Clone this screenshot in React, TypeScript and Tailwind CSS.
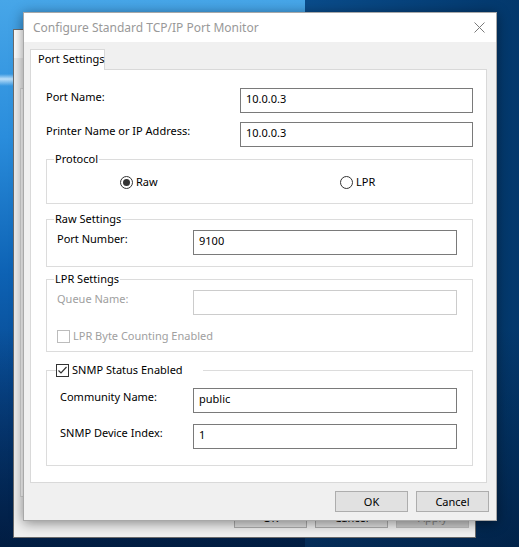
import type { ReactNode } from 'react';

const font = "font-['Segoe_UI','Noto_Sans',sans-serif] text-[11px] leading-[16px]";

function TextBox({ value, width, disabled }: { value?: string; width: string; disabled?: boolean }) {
  return (
    <div
      className={`${width} h-[25px] bg-white border px-[5px] pt-[2px] ${
        disabled ? 'border-[#cccccc]' : 'border-[#7a7a7a]'
      }`}
    >
      {value}
    </div>
  );
}

function Radio({ checked, label }: { checked?: boolean; label: string }) {
  return (
    <div className="flex items-center gap-[3px]">
      <span className="w-[13px] h-[13px] rounded-full border border-[#333333] bg-white flex items-center justify-center">
        {checked && <span className="w-[7px] h-[7px] rounded-full bg-[#333333]" />}
      </span>
      <span>{label}</span>
    </div>
  );
}

function CheckBox({ checked, disabled }: { checked?: boolean; disabled?: boolean }) {
  return (
    <span
      className={`w-[13px] h-[13px] bg-white border flex items-center justify-center ${
        disabled ? 'border-[#bcbcbc]' : 'border-[#333333]'
      }`}
    >
      {checked && (
        <svg width="11" height="11" viewBox="0 0 11 11">
          <path d="M1.5 5.5 L4 8 L9.5 2" fill="none" stroke="#333333" strokeWidth="1.2" />
        </svg>
      )}
    </span>
  );
}

function Group({ legend, className, children }: { legend: ReactNode; className: string; children: ReactNode }) {
  return (
    <fieldset className={`border border-[#dcdcdc] w-[427px] ${className}`}>
      {legend}
      {children}
    </fieldset>
  );
}

function TextLegend({ text }: { text: string }) {
  return <legend className="ml-[7px] px-[1px]">{text}</legend>;
}

function Row({ label, labelW, children, muted }: { label: string; labelW: string; children: ReactNode; muted?: boolean }) {
  return (
    <div className="flex items-start">
      <div className={`${labelW} pt-[1px] ${muted ? 'text-[#a0a0a0]' : ''}`}>{label}</div>
      {children}
    </div>
  );
}

function Button({ label, disabled }: { label: string; disabled?: boolean }) {
  return (
    <div
      className={`w-[73px] h-[21px] border flex items-center justify-center ${
        disabled ? 'bg-[#cccccc] border-[#bfbfbf] text-[#838383]' : 'bg-[#e1e1e1] border-[#adadad]'
      }`}
    >
      {label}
    </div>
  );
}

export default function App() {
  return (
    <div
      className={`relative w-[519px] h-[547px] overflow-hidden text-black ${font} bg-[linear-gradient(180deg,transparent_60%,rgba(0,18,45,0.55)_100%),linear-gradient(90deg,transparent_305px,#0a4c8b_305px,#03386c_100%),linear-gradient(180deg,transparent_74px,rgba(220,240,255,0.8)_79px,transparent_86px),linear-gradient(180deg,#47a6e8_0%,#2a8ddc_25%,#0d62b4_50%,#07468c_72%,#022a5c_100%)]`}
    >
      {/* back window (port properties) */}
      <div className="absolute left-[13px] top-[29px] w-[463px] h-[509px] bg-[#f0f0f0] border border-[#6b6b6b] flex flex-col">
        <div className="h-[28px] bg-white" />
        <div className="ml-[6px] mr-[6px] mt-[30px] h-[409px] bg-white border border-[#d9d9d9]" />
        <div className="flex justify-end gap-[8px] pr-[6px] mt-[10px]">
          <Button label="OK" />
          <Button label="Cancel" />
          <Button label="Apply" disabled />
        </div>
      </div>

      {/* front dialog */}
      <div className="absolute left-[23px] top-[12px] w-[474px] h-[509px] border border-[#a8a8a8] bg-[#f0f0f0] flex flex-col shadow-[0_2px_12px_rgba(0,0,0,0.45)]">
        <div className="h-[29px] bg-white flex items-center justify-between pl-[9px] pr-[11px]">
          <span className="text-[12px] text-[#999999]">Configure Standard TCP/IP Port Monitor</span>
          <svg width="11" height="11" viewBox="0 0 11 11">
            <path d="M0.5 0.5 L10.5 10.5 M10.5 0.5 L0.5 10.5" stroke="#7a7a7a" strokeWidth="1" />
          </svg>
        </div>

        <div className="pl-[6px] pt-[7px] flex flex-col">
          <div className="flex">
            <div className="relative z-10 -mb-px w-[75px] h-[21px] bg-white border border-b-0 border-[#d9d9d9] pl-[7px] pt-[1px] whitespace-nowrap">
              Port Settings
            </div>
          </div>

          <div className="w-[457px] h-[414px] bg-white border border-[#d9d9d9] pl-[15px] pt-[18px] flex flex-col">
            <div className="flex flex-col gap-[9px]">
              <Row label="Port Name:" labelW="w-[194px]">
                <TextBox value="10.0.0.3" width="w-[233px]" />
              </Row>
              <Row label="Printer Name or IP Address:" labelW="w-[194px]">
                <TextBox value="10.0.0.3" width="w-[233px]" />
              </Row>
            </div>

            <Group legend={<TextLegend text="Protocol" />} className="mt-[4px]">
              <div className="flex pl-[73px] pt-[7px] pb-[13px]">
                <div className="w-[220px]">
                  <Radio checked label="Raw" />
                </div>
                <Radio label="LPR" />
              </div>
            </Group>

            <Group legend={<TextLegend text="Raw Settings" />} className="mt-[7px]">
              <div className="pl-[10px] pt-[3px] pb-[11px]">
                <Row label="Port Number:" labelW="w-[136px]">
                  <TextBox value="9100" width="w-[264px]" />
                </Row>
              </div>
            </Group>

            <Group legend={<TextLegend text="LPR Settings" />} className="mt-[4px]">
              <div className="pl-[10px] pt-[3px] pb-[7px] flex flex-col">
                <Row label="Queue Name:" labelW="w-[136px]" muted>
                  <TextBox width="w-[264px]" disabled />
                </Row>
                <div className="flex items-center gap-[3px] mt-[13px] text-[#a0a0a0]">
                  <CheckBox disabled />
                  <span>LPR Byte Counting Enabled</span>
                </div>
              </div>
            </Group>

            <Group
              legend={
                <legend className="ml-[9px] pr-[20px] flex items-center gap-[3px]">
                  <CheckBox checked />
                  <span>SNMP Status Enabled</span>
                </legend>
              }
              className="mt-[10px]"
            >
              <div className="pl-[13px] pt-[10px] pb-[16px] flex flex-col gap-[11px]">
                <Row label="Community Name:" labelW="w-[133px]">
                  <TextBox value="public" width="w-[264px]" />
                </Row>
                <Row label="SNMP Device Index:" labelW="w-[133px]">
                  <TextBox value="1" width="w-[264px]" />
                </Row>
              </div>
            </Group>
          </div>

          <div className="flex gap-[8px] pl-[305px] mt-[8px]">
            <Button label="OK" />
            <Button label="Cancel" />
          </div>
        </div>
      </div>
    </div>
  );
}
